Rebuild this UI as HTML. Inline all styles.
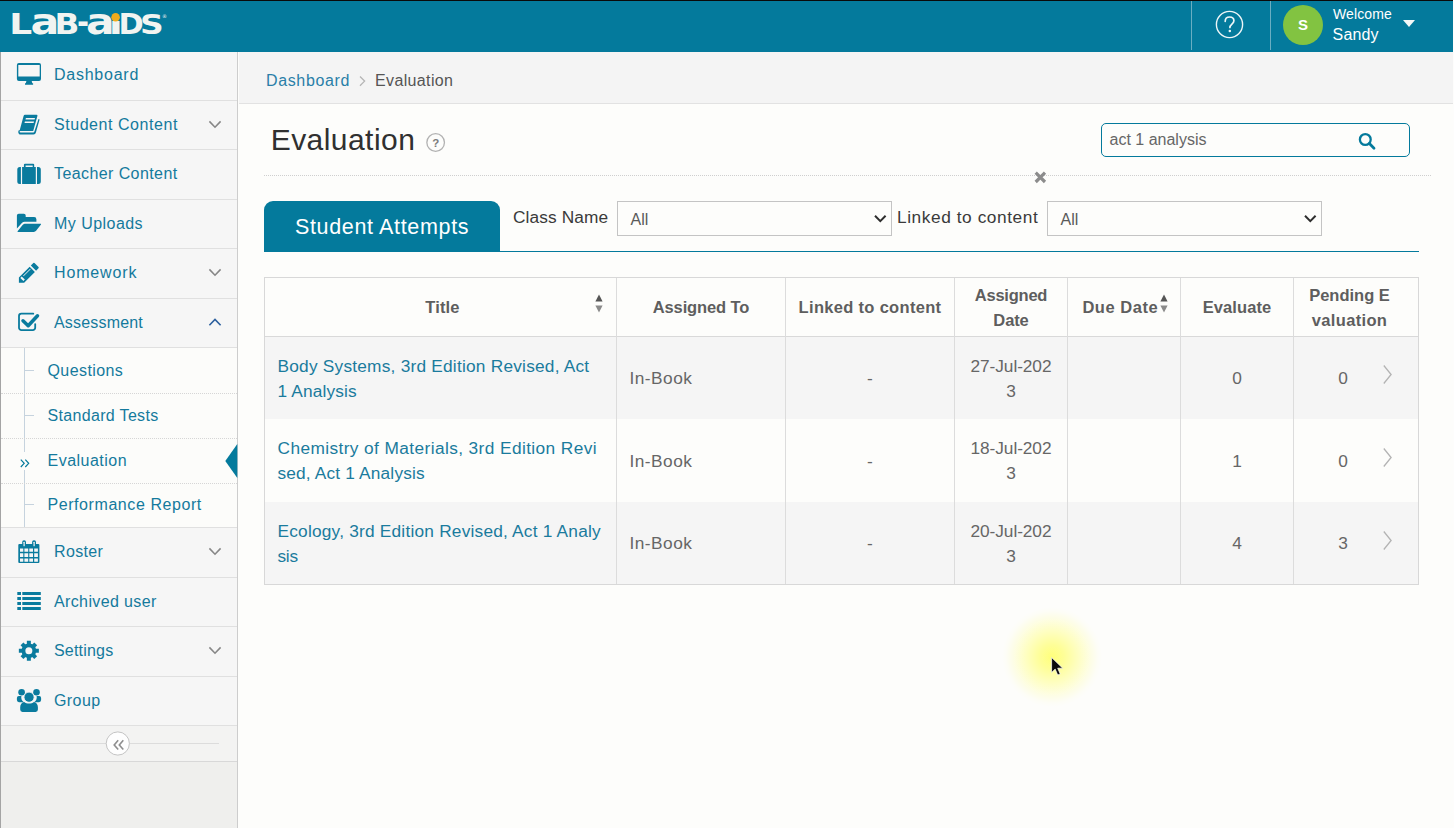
<!DOCTYPE html>
<html lang="en">
<head>
<meta charset="utf-8">
<title>Evaluation</title>
<style>
*{box-sizing:border-box;margin:0;padding:0}
html,body{width:1454px;height:828px;overflow:hidden;background:#fdfdfb;font-family:"Liberation Sans","DejaVu Sans",sans-serif;color:#393939}
.abs{position:absolute;white-space:nowrap}
#page{position:relative;width:1454px;height:828px;overflow:hidden;background:#fdfdfb}
/* header */
#hdr{z-index:5;position:absolute;left:0;top:0;width:1454px;height:52px;background:#047a9c;border-top:1px solid #0a0a0a}
#hdr .div{position:absolute;top:0;width:1px;height:49px;background:#6aaec2}
/* sidebar */
#side{position:absolute;left:0;top:52px;width:238px;height:776px;background:#efefed;border-left:1px solid #a4a4a4;border-right:1px solid #cdcdcd}
.it{position:absolute;left:1px;width:236px;background:#f6f6f6;border-bottom:1px solid #e0e0e0}
.lbl{position:absolute;left:54px;font-size:16px;line-height:20px;color:#147a9d;white-space:nowrap;letter-spacing:.55px}
.lbl.sub{left:47.500px;letter-spacing:.45px}
.subbg{position:absolute;left:1px;width:236px;background:#fcfcfa;border-bottom:1px solid #e0e0e0}
.subline{position:absolute;left:1px;width:236px;height:0;border-top:1px dotted #d6d6d6}
/* breadcrumb */
#bc{position:absolute;left:239px;top:52px;width:1215px;height:52px;background:#f4f4f4;border-bottom:1px solid #e2e2e2}
/* table */
#tbl{position:absolute;left:264px;top:277px;width:1155px;height:308px;border:1px solid #d8d8d8;background:#fdfdfb}
#tbl .row{position:absolute;left:0;width:1153px}
#tbl .vl{position:absolute;top:0;width:1px;height:306px;background:#dcdcdc}
.th{position:absolute;font-weight:bold;font-size:16.500px;color:#5e5e5e;text-align:center;white-space:nowrap;line-height:25px}
.td{position:absolute;font-size:17.300px;color:#666;white-space:nowrap;line-height:25px}
.lnk{color:#1a7b9d}
.ctr{text-align:center}
.sel{border:1px solid #c4c4c4;background:#fdfdfb}
</style>
</head>
<body>
<div id="page">

<!-- HEADER -->
<div id="hdr">
  <div class="div" style="left:1191px"></div>
  <div class="div" style="left:1270px"></div>
  <!-- logo -->
  <svg class="abs" style="left:0;top:-.6px" width="180" height="52" viewBox="0 0 180 52" font-family="DejaVu Sans, Liberation Sans, sans-serif" font-weight="bold" font-size="100" fill="#f1f4f1"><text transform="translate(9.16 34.40) scale(0.3596 0.2808)">L</text><text transform="translate(30.59 34.05) scale(0.4286 0.3534)">a</text><text transform="translate(54.46 34.40) scale(0.3262 0.2808)">B</text><text transform="translate(77.05 33.09) scale(0.2906 0.3133)">-</text><text transform="translate(86.10 34.05) scale(0.4250 0.3534)">a</text><text transform="translate(108.71 34.40) scale(0.4111 0.2327)">ı</text><text transform="translate(118.46 34.40) scale(0.3043 0.2808)">D</text><text transform="translate(140.09 34.13) scale(0.3293 0.2697)">S</text><circle cx="115.600" cy="17.200" r="4.300" fill="#f0ab1c"/><text x="162" y="18" font-size="5" font-weight="normal">®</text></svg>
  <!-- help -->
  <svg class="abs" style="left:1214px;top:8.200px" width="31" height="31" viewBox="0 0 31 31"><circle cx="15.5" cy="15.5" r="13.100" fill="none" stroke="#eef6f8" stroke-width="1.400"/><path d="M11.2 12.3c0-2.6 1.9-4.3 4.4-4.3 2.6 0 4.3 1.6 4.3 3.8 0 3.1-4 3.4-4 6.6" fill="none" stroke="#eef6f8" stroke-width="1.7" stroke-linecap="round"/><circle cx="15.8" cy="21.9" r="1.25" fill="#eef6f8"/></svg>
  <!-- avatar -->
  <div class="abs" style="left:1283px;top:3.600px;width:40px;height:40px;border-radius:50%;background:#82c341;color:#fff;font-weight:bold;font-size:15px;line-height:40px;text-align:center">S</div>
  <div class="abs" style="left:1333px;top:4px;font-size:14px;line-height:18px;color:#fff;letter-spacing:.1px">Welcome</div>
  <div class="abs" style="left:1332.600px;top:23px;font-size:16px;line-height:22px;color:#fff;letter-spacing:.15px">Sandy</div>
  <div class="abs" style="left:1402.500px;top:19px;width:0;height:0;border-left:6px solid transparent;border-right:6px solid transparent;border-top:7px solid #f4f8f8"></div>
</div>

<!-- SIDEBAR -->
<div id="side"></div>
<div class="it" style="top:52px;height:49px"></div><div class="lbl" style="top:65px;letter-spacing:0.75px">Dashboard</div>
<div class="it" style="top:101px;height:49px"></div><div class="lbl" style="top:115px;letter-spacing:0.55px">Student Content</div><svg class="abs" style="left:0;top:0" width="238" height="780"><path d="M209.400 121.4l5.600 5.800 5.600-5.800" fill="none" stroke="#878787" stroke-width="1.600"/></svg>
<div class="it" style="top:150px;height:50px"></div><div class="lbl" style="top:164px;letter-spacing:0.41px">Teacher Content</div>
<div class="it" style="top:200px;height:49px"></div><div class="lbl" style="top:214px;letter-spacing:0.46px">My Uploads</div>
<div class="it" style="top:249px;height:50px"></div><div class="lbl" style="top:263px;letter-spacing:0.86px">Homework</div><svg class="abs" style="left:0;top:0" width="238" height="780"><path d="M209.400 269.4l5.600 5.800 5.600-5.800" fill="none" stroke="#878787" stroke-width="1.600"/></svg>
<div class="it" style="top:299px;height:49px"></div><div class="lbl" style="top:313px;letter-spacing:0.18px">Assessment</div><svg class="abs" style="left:0;top:0" width="238" height="780"><path d="M209.400 325.2l5.600-5.800 5.600 5.800" fill="none" stroke="#2c5f9e" stroke-width="1.600"/></svg>
<div class="subbg" style="top:348px;height:180px"></div>
<div class="abs" style="left:24px;top:348px;width:1px;height:104px;background:#c6d3de"></div>
<div class="abs" style="left:24px;top:470px;width:1px;height:57px;background:#c6d3de"></div>
<div class="subline" style="top:393px"></div>
<div class="subline" style="top:438px"></div>
<div class="subline" style="top:483px"></div>
<div class="abs" style="left:25px;top:370px;width:9px;height:1px;background:#c6d3de"></div>
<div class="lbl sub" style="top:361px;letter-spacing:0.41px">Questions</div>
<div class="abs" style="left:25px;top:415px;width:9px;height:1px;background:#c6d3de"></div>
<div class="lbl sub" style="top:406px;letter-spacing:0.33px">Standard Tests</div>
<div class="lbl sub" style="top:451px;letter-spacing:0.49px">Evaluation</div>
<div class="abs" style="left:25px;top:504px;width:9px;height:1px;background:#c6d3de"></div>
<div class="lbl sub" style="top:495px;letter-spacing:0.57px">Performance Report</div>
<div class="it" style="top:528px;height:50px"></div><div class="lbl" style="top:542px;letter-spacing:0.35px">Roster</div><svg class="abs" style="left:0;top:0" width="238" height="780"><path d="M209.400 548.4l5.600 5.800 5.600-5.800" fill="none" stroke="#878787" stroke-width="1.600"/></svg>
<div class="it" style="top:578px;height:49px"></div><div class="lbl" style="top:592px;letter-spacing:0.37px">Archived user</div>
<div class="it" style="top:627px;height:50px"></div><div class="lbl" style="top:641px;letter-spacing:0.19px">Settings</div><svg class="abs" style="left:0;top:0" width="238" height="780"><path d="M209.400 647.4l5.600 5.800 5.600-5.800" fill="none" stroke="#878787" stroke-width="1.600"/></svg>
<div class="it" style="top:677px;height:49px"></div><div class="lbl" style="top:691px;letter-spacing:0.42px">Group</div>
<svg class="abs" style="left:0;top:0" width="238" height="780" viewBox="0 0 238 780" fill="#0a7b9e">
 <!-- desktop -->
 <path fill-rule="evenodd" d="M18.9 63h20.1a2 2 0 0 1 2 2v14a2 2 0 0 1-2 2H18.9a2 2 0 0 1-2-2V65a2 2 0 0 1 2-2zM18.3 65v11.4h21.4V65z"/>
 <path d="M26.4 81h5.3l.6 2.3h.8v1.4h-8.1v-1.4h.8z"/>
 <!-- book -->
 <path d="M25 114.800h11.400a1 1 0 0 1 1 1.300L33.200 130.900H19.500l4.100-14.900a1.600 1.600 0 0 1 1.400-1.200z"/>
 <path d="M25.900 118.100h9.100l-.4 1.500h-9.100zM24.900 121.400h9.100l-.4 1.500h-9.100z" fill="#f6f6f6"/>
 <path d="M38.500 118.900l1.100.5-3.700 13.100a2.500 2.500 0 0 1-2.400 2H20.700a2.400 2.400 0 0 1-2.400-2.900l.5-1.400h1.200l-.2.900a1.100 1.100 0 0 0 1.100 1.500h12.300a1.100 1.100 0 0 0 1.100-.8z"/>
 <!-- suitcase -->
 <path d="M19.800 166.900h1.100v17h-1.100a2.500 2.500 0 0 1-2.500-2.500v-12a2.500 2.500 0 0 1 2.500-2.500zM22.100 166.900h13.700v17H22.100zM37 166.900h1.300a2.500 2.500 0 0 1 2.500 2.500v12a2.500 2.500 0 0 1-2.500 2.500h-1.300z"/>
 <path fill-rule="evenodd" d="M25 163.700h8.100a1.100 1.100 0 0 1 1.100 1.100v2.300H23.900v-2.300a1.100 1.100 0 0 1 1.100-1.100zM25.600 165.600v1.500h7.100v-1.500z"/>
 <!-- folder open -->
 <path d="M18.700 213.700h5.200a1.800 1.800 0 0 1 1.800 1.800v1.500h8.400a2.300 2.300 0 0 1 2.300 2.300v2.400H24.600a3.500 3.500 0 0 0-2.500 1.100l-5.200 5.800V215.500a1.800 1.800 0 0 1 1.800-1.800z"/>
 <path d="M24.600 223.800h15.800c.7 0 .8.500.4 1l-4.700 6a3.300 3.300 0 0 1-2.300 1.200H18.200c-.7 0-.8-.5-.4-1l4.800-6a3.300 3.300 0 0 1 2-1.200z"/>
 <!-- pencil -->
 <path d="M18.900 282.700V277.470L29.650 266.720 34.880 271.950 24.130 282.700zM30.850 265.520L33.300 263.070a.900.900 0 0 1 1.200 0L38.500 267.100a.900.900 0 0 1 0 1.200L36.080 270.750z"/>
 <path d="M23.110 275.740L30.180 268.660 30.670 269.160 23.600 276.230zM20.310 277.890L21.730 276.480 24.840 279.590 23.430 281z" fill="#f6f6f6"/>
 <!-- check-square-o -->
 <path d="M33.300 313.700H21.400a2.400 2.400 0 0 0-2.400 2.400v11.600a2.400 2.400 0 0 0 2.400 2.400h11.400a2.400 2.400 0 0 0 2.400-2.400v-3.600" fill="none" stroke="#0a7b9e" stroke-width="1.800" stroke-linecap="round"/>
 <path d="M23 320.800L28.200 325.700 37.500 315.800" fill="none" stroke="#0a7b9e" stroke-width="3.500" stroke-linejoin="round" stroke-linecap="round"/>
 <!-- calendar -->
 <path fill-rule="evenodd" d="M19.300 544.100h19.100a1 1 0 0 1 1 1v16.800a1 1 0 0 1-1 1H19.300a1 1 0 0 1-1-1v-16.800a1 1 0 0 1 1-1zM20 548.400v3.300h3.300v-3.300zM24.400 548.400v3.300h3.800v-3.300zM29.300 548.400v3.300h3.700v-3.300zM34.200 548.400v3.300h3.700v-3.300zM20 553.200v3.700h3.300v-3.700zM24.400 553.200v3.700h3.800v-3.700zM29.300 553.200v3.700h3.700v-3.700zM34.200 553.200v3.700h3.700v-3.700zM20 558.400v3.300h3.300v-3.300zM24.400 558.400v3.300h3.800v-3.300zM29.300 558.400v3.300h3.700v-3.300zM34.200 558.400v3.300h3.700v-3.300z"/>
 <rect x="22.200" y="540.200" width="3.800" height="6.900" rx="1.800"/><rect x="32.100" y="540.200" width="3.900" height="6.900" rx="1.800"/>
 <rect x="23.500" y="541.700" width="1.200" height="4.600" rx=".6" fill="#f6f6f6"/><rect x="33.500" y="541.700" width="1.200" height="4.600" rx=".6" fill="#f6f6f6"/>
 <!-- list -->
 <path d="M17.300 592h3.700v3h-3.700zM22.300 592h18.500v3H22.300zM17.300 597h3.700v3h-3.700zM22.300 597h18.500v3H22.300zM17.300 601.900h3.700v3h-3.700zM22.300 601.900h18.500v3H22.300zM17.300 606.900h3.700v3.100h-3.700zM22.300 606.900h18.500v3.100H22.300z"/>
 <!-- cog -->
 <g transform="translate(28.850 650.750)">
  <path fill-rule="evenodd" d="M7.300 0A7.300 7.300 0 1 1-7.300 0A7.300 7.300 0 1 1 7.300 0zM3.500 0A3.500 3.500 0 1 0-3.500 0A3.500 3.500 0 1 0 3.500 0z"/>
  <g id="teeth"><rect x="-2" y="-10" width="4" height="4"/><rect x="-2" y="6" width="4" height="4"/><rect x="-10" y="-2" width="4" height="4"/><rect x="6" y="-2" width="4" height="4"/></g>
  <g transform="rotate(45)"><rect x="-2" y="-9.700" width="4" height="4"/><rect x="-2" y="5.700" width="4" height="4"/><rect x="-9.700" y="-2" width="4" height="4"/><rect x="5.700" y="-2" width="4" height="4"/></g>
 </g>
 <!-- users -->
 <circle cx="21.600" cy="692.300" r="3.300"/><circle cx="36.500" cy="692.300" r="3.300"/>
 <path d="M18.900 696h2.500a6 6 0 0 0 2.500 6.200H19a2.100 2.100 0 0 1-2.100-2.100V698a2 2 0 0 1 2-2zM39.100 696h-2.500a6 6 0 0 1-2.500 6.200h4.900a2.100 2.100 0 0 0 2.100-2.100V698a2 2 0 0 0-2-2z"/>
 <circle cx="29.050" cy="697.200" r="5.100" stroke="#f6f6f6" stroke-width=".900"/>
 <path d="M24.200 702c1.300 1 3 1.600 4.850 1.600s3.550-.6 4.850-1.600c2.400.2 4 2.500 4 5.200v2.400a2.300 2.300 0 0 1-2.300 2.300H22.500a2.300 2.300 0 0 1-2.300-2.300v-2.400c0-2.700 1.600-5 4-5.200z"/>
</svg>



<!-- active marker -->
<svg class="abs" style="left:19px;top:457px" width="12" height="12"><path d="M1.800 2.600l3.400 3.700-3.400 3.700M6.300 2.600l3.400 3.700-3.400 3.700" fill="none" stroke="#047a9c" stroke-width="1.200"/></svg>
<svg class="abs" style="left:224px;top:443px" width="14" height="36"><path d="M13.300 1L1.300 17.900 13.300 34.900z" fill="#047a9c"/></svg>
<!-- collapse -->
<div class="abs" style="left:1px;top:726px;width:236px;height:36px;background:#f3f3f2;border-bottom:1px solid #d8d8d8"></div>
<div class="abs" style="left:20px;top:743px;width:199px;height:1px;background:#dcdcdc"></div>
<svg class="abs" style="left:100px;top:726px" width="36" height="36"><circle cx="17.800" cy="17.500" r="11.600" fill="#fefefe" stroke="#c4c4c4" stroke-width="1"/><path d="M18.200 14.300l-4 4.600 4 4.600M23.300 14.300l-4 4.600 4 4.600" fill="none" stroke="#8e8e8e" stroke-width="1.600"/></svg>

<!-- BREADCRUMB -->
<div id="bc"></div>
<div class="abs" style="left:266px;top:71px;font-size:16px;line-height:20px;color:#2a7fa8;letter-spacing:.64px">Dashboard</div>
<svg class="abs" style="left:356.500px;top:74px" width="12" height="14"><path d="M3 2.500l4.600 4.600L3 11.700" fill="none" stroke="#b5b5b5" stroke-width="1.300"/></svg>
<div class="abs" style="left:375px;top:71px;font-size:16px;line-height:20px;color:#555;letter-spacing:.36px">Evaluation</div>

<div class="abs" id="ttl" style="left:270.700px;top:123px;font-size:30px;line-height:34px;color:#303030;letter-spacing:.45px">Evaluation</div>
<svg class="abs" style="left:424px;top:131px" width="24" height="24"><circle cx="11.650" cy="11.500" r="8.800" fill="none" stroke="#b2b2b2" stroke-width="1.300"/><text x="11.700" y="15.600" text-anchor="middle" font-family="Liberation Sans, sans-serif" font-weight="bold" font-size="11.500" fill="#7c7c7c">?</text></svg>

<!-- search -->
<div class="abs" style="left:1101px;top:123px;width:309px;height:34px;border:1px solid #047a9c;border-radius:5px;background:#fdfdfb"></div>
<div class="abs" style="left:1109.500px;top:130px;font-size:16px;line-height:20px;color:#666">act 1 analysis</div>
<svg class="abs" style="left:1356px;top:131px" width="22" height="22"><circle cx="9.300" cy="8.500" r="5.400" fill="none" stroke="#047a9c" stroke-width="2.300"/><path d="M13.400 12.600l4.600 4.600" stroke="#047a9c" stroke-width="2.800" stroke-linecap="round"/></svg>

<div class="abs" style="left:264px;top:175px;width:1167px;height:0;border-top:1px dotted #cfcfcf"></div>
<svg class="abs" style="left:1033px;top:170px" width="15" height="15"><path d="M2.700 2.700l9.300 9.300M12 2.700l-9.300 9.300" stroke="#8c8c8c" stroke-width="3.200"/></svg>

<!-- tab -->
<div class="abs" style="left:264px;top:251px;width:1155px;height:1px;background:#047a9c"></div>
<div class="abs" style="left:264px;top:201px;width:236px;height:51px;background:#047a9c;border-radius:9px 9px 0 0"></div>
<div class="abs" style="left:294.900px;top:213px;font-size:21.500px;line-height:28px;color:#fff;letter-spacing:.66px">Student Attempts</div>

<div class="abs" style="left:513px;top:205px;font-size:17.300px;line-height:24px;color:#3a3a3a;letter-spacing:.12px">Class Name</div>
<div class="abs sel" style="left:617px;top:201px;width:275px;height:35px"></div>
<div class="abs" style="left:630.500px;top:209.500px;font-size:16px;line-height:20px;color:#5a5a5a">All</div>
<svg class="abs" style="left:872px;top:212px" width="16" height="14"><path d="M3 3.800l5.300 5.300 5.300-5.300" fill="none" stroke="#2e2e2e" stroke-width="2"/></svg>
<div class="abs" style="left:897px;top:205px;font-size:17.300px;line-height:24px;color:#3a3a3a;letter-spacing:.57px">Linked to content</div>
<div class="abs sel" style="left:1047px;top:201px;width:275px;height:35px"></div>
<div class="abs" style="left:1060.500px;top:209.500px;font-size:16px;line-height:20px;color:#5a5a5a">All</div>
<svg class="abs" style="left:1302px;top:212px" width="16" height="14"><path d="M3 3.800l5.300 5.300 5.300-5.300" fill="none" stroke="#2e2e2e" stroke-width="2"/></svg>


<!-- MAIN -->
<div id="tbl"></div>
<div class="abs" style="left:265px;top:336px;width:1153px;height:83px;background:#f5f5f5"></div>
<div class="td lnk" style="left:277.500px;top:353.5px"><span style="letter-spacing:0.22px">Body Systems, 3rd Edition Revised, Act</span><br><span style="letter-spacing:0.16px">1 Analysis</span></div>
<div class="td" style="left:629.500px;top:365.5px;letter-spacing:.47px">In-Book</div>
<div class="td ctr" style="left:786px;width:168px;top:365.5px">-</div>
<div class="td ctr" style="left:955px;width:112px;top:353.5px;letter-spacing:-.08px">27-Jul-202<br>3</div>
<div class="td ctr" style="left:1181px;width:112px;top:365.5px">0</div>
<div class="td ctr" style="left:1323px;width:40px;top:365.5px">0</div>
<svg class="abs" style="left:1380px;top:363.0px" width="14" height="24"><path d="M3.800 2.500l7.300 9-7.300 9" fill="none" stroke="#b3b3b3" stroke-width="1.300"/></svg>
<div class="abs" style="left:265px;top:419px;width:1153px;height:83px;background:#fdfdfb"></div>
<div class="td lnk" style="left:277.500px;top:435.5px"><span style="letter-spacing:0.4px">Chemistry of Materials, 3rd Edition Revi</span><br><span style="letter-spacing:0.17px">sed, Act 1 Analysis</span></div>
<div class="td" style="left:629.500px;top:448.5px;letter-spacing:.47px">In-Book</div>
<div class="td ctr" style="left:786px;width:168px;top:448.5px">-</div>
<div class="td ctr" style="left:955px;width:112px;top:435.5px;letter-spacing:-.08px">18-Jul-202<br>3</div>
<div class="td ctr" style="left:1181px;width:112px;top:448.5px">1</div>
<div class="td ctr" style="left:1323px;width:40px;top:448.5px">0</div>
<svg class="abs" style="left:1380px;top:446.0px" width="14" height="24"><path d="M3.800 2.500l7.300 9-7.300 9" fill="none" stroke="#b3b3b3" stroke-width="1.300"/></svg>
<div class="abs" style="left:265px;top:502px;width:1153px;height:82px;background:#f5f5f5"></div>
<div class="td lnk" style="left:277.500px;top:518.5px"><span style="letter-spacing:0.21px">Ecology, 3rd Edition Revised, Act 1 Analy</span><br><span style="letter-spacing:-0.3px">sis</span></div>
<div class="td" style="left:629.500px;top:530.5px;letter-spacing:.47px">In-Book</div>
<div class="td ctr" style="left:786px;width:168px;top:530.5px">-</div>
<div class="td ctr" style="left:955px;width:112px;top:518.5px;letter-spacing:-.08px">20-Jul-202<br>3</div>
<div class="td ctr" style="left:1181px;width:112px;top:530.5px">4</div>
<div class="td ctr" style="left:1323px;width:40px;top:530.5px">3</div>
<svg class="abs" style="left:1380px;top:528.5px" width="14" height="24"><path d="M3.800 2.500l7.300 9-7.300 9" fill="none" stroke="#b3b3b3" stroke-width="1.300"/></svg>
<div class="abs" style="left:265px;top:336px;width:1153px;height:1px;background:#d9d9d9"></div>
<div class="abs" style="left:616px;top:278px;width:1px;height:306px;background:#dcdcdc"></div>
<div class="abs" style="left:785px;top:278px;width:1px;height:306px;background:#dcdcdc"></div>
<div class="abs" style="left:954px;top:278px;width:1px;height:306px;background:#dcdcdc"></div>
<div class="abs" style="left:1067px;top:278px;width:1px;height:306px;background:#dcdcdc"></div>
<div class="abs" style="left:1180px;top:278px;width:1px;height:306px;background:#dcdcdc"></div>
<div class="abs" style="left:1293px;top:278px;width:1px;height:306px;background:#dcdcdc"></div>
<div class="th" style="left:269px;width:347px;top:294.5px;letter-spacing:0.15px">Title</div>
<div class="th" style="left:617px;width:168px;top:294.5px;letter-spacing:-0.11px">Assigned To</div>
<div class="th" style="left:786px;width:168px;top:294.5px;letter-spacing:0.31px">Linked to content</div>
<div class="th" style="left:955px;width:112px;top:282.500px"><span style="letter-spacing:-.23px">Assigned</span><br><span style="letter-spacing:-.1px">Date</span></div>
<div class="th" style="left:1082.400px;top:294.500px;letter-spacing:.53px;text-align:left">Due Date</div>
<div class="th" style="left:1181px;width:112px;top:294.5px;letter-spacing:0.1px">Evaluate</div>
<div class="th" style="left:1294px;width:111px;top:282.500px"><span style="letter-spacing:0px">Pending E</span><br><span style="letter-spacing:.34px">valuation</span></div>
<svg class="abs" style="left:593.7px;top:293px" width="10" height="21"><path d="M5 1.500l3.600 7H1.400z" fill="#555"/><path d="M5 19.500l3.600-7H1.400z" fill="#8a8a8a"/></svg>
<svg class="abs" style="left:1158.7px;top:293px" width="10" height="21"><path d="M5 1.500l3.600 7H1.400z" fill="#555"/><path d="M5 19.500l3.600-7H1.400z" fill="#8a8a8a"/></svg>

<div class="abs" style="left:1453px;top:0;width:1px;height:828px;background:#fdfdfc;z-index:9"></div>
<!-- cursor highlight -->
<div class="abs" style="left:1002.300px;top:606.900px;width:100px;height:100px;border-radius:50%;background:radial-gradient(circle closest-side,rgba(255,255,105,.88) 0%,rgba(255,255,115,.72) 25%,rgba(255,255,130,.5) 50%,rgba(255,255,160,.27) 75%,rgba(255,255,200,.09) 92%,rgba(255,255,255,0) 100%)"></div>
<svg class="abs" style="left:1050px;top:656px" width="16" height="22"><path d="M1.600 1.500v15l3.600-3.400 2.500 5.900 2.500-1.100-2.500-5.700h5z" fill="#0a0a0a" stroke="#fff" stroke-width=".7"/></svg>

</div>
</body>
</html>
